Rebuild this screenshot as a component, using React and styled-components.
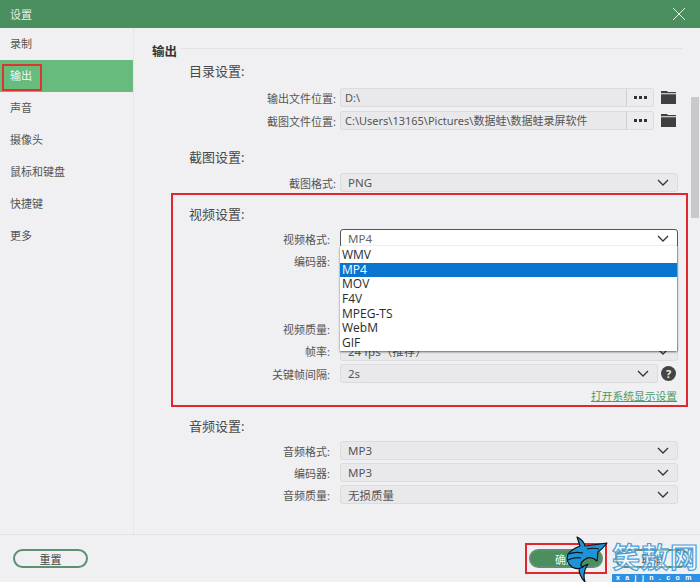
import React from "react";
import styled, { createGlobalStyle } from "styled-components";

const Global = createGlobalStyle`
  html, body { margin: 0; padding: 0; }
  body { width: 700px; height: 582px; overflow: hidden; background: #f0f0f2; }
  * { box-sizing: border-box; }
`;
const CJK = `"Noto Sans", "Noto Sans CJK SC", sans-serif`;

const Window = styled.div`
  position: relative; width: 700px; height: 582px; overflow: hidden;
  display: flex; flex-direction: column; background: #f0f0f2; color: #4a4a4a;
  font-family: ${CJK}; font-size: 11px;
`;
const TitleBar = styled.header`
  height: 28px; flex: none; background: #4b8f5f; color: #e6f0e8;
  display: flex; align-items: center; justify-content: space-between;
  padding: 0 14px 0 10px; font-size: 11px;
`;
const Content = styled.div`flex: 1; display: flex; min-height: 0; border-bottom: 1px solid #e2e2e4;`;
const Sidebar = styled.nav`width: 134px; flex: none; border-right: 1px solid #e6e6e8; display: flex; flex-direction: column;`;
const NavItem = styled.div`
  position: relative; height: 32px; line-height: 32px; padding-left: 10px; font-size: 11px;
  background: ${p => p.$active ? "#67bb7d" : "transparent"};
  color: ${p => p.$active ? "#f0f8f2" : "#555"};
`;
const NavMark = styled.span`
  position: absolute; left: 2px; top: 4px; width: 40px; height: 27px; border: 2px solid #d8362f;
`;
const Main = styled.main`position: relative; flex: 1; padding: 13px 0 0 18px; min-width: 0;`;
const Heading = styled.div`
  display: flex; align-items: center; gap: 4px; height: 18px; width: 530px;
  font-size: 12.5px; font-weight: 700; color: #333;
  &::after { content: ""; flex: 1; height: 1px; background: #e2e2e4; margin-top: -4px; }
`;
const SectionTitle = styled.div`
  height: 18px; line-height: 16px; margin-left: ${p => p.$inset ?? 37}px; margin-top: ${p => p.$mt ?? 0}px;
  font-size: 13px; color: #484848;
`;
const Rows = styled.div`display: flex; flex-direction: column; gap: ${p => p.$gap ?? 3}px; margin-top: ${p => p.$mt ?? 5}px;`;
const Row = styled.div`display: flex; align-items: center; height: 19px;`;
const Label = styled.label`
  width: ${p => p.$w}px; flex: none; text-align: right; font-size: 11px; color: #555; white-space: nowrap;
`;
const Field = styled.div`
  height: 19.5px; display: flex; align-items: center; justify-content: space-between;
  width: ${p => p.$w}px; flex: none; margin-left: ${p => p.$ml ?? 10}px; padding: 0 8px 0 7px;
  background: ${p => p.$open ? "#fff" : "#e9e9eb"};
  border: 1px solid ${p => p.$open ? "#555" : "#dcdcde"};
  border-radius: 3px; font-size: 11.5px; color: ${p => p.$open ? "#666" : "#555"}; white-space: nowrap;
`;
const PathGroup = styled.div`display: flex; margin-left: 4px;`;
const PathInput = styled.div`
  width: 287px; height: 19.5px; line-height: 18px; padding-left: 4px; background: #e9e9eb;
  border: 1px solid #dcdcde; border-right: 1px solid #cfcfd1; border-radius: 3px 0 0 3px;
  font-size: 11px; color: #555; white-space: nowrap; overflow: hidden;
`;
const DotsButton = styled.div`
  width: 27px; height: 19.5px; display: flex; align-items: center; justify-content: center; gap: 2px;
  background: #ececee; border: 1px solid #dcdcde; border-left: 0; border-radius: 0 3px 3px 0;
`;
const Dot = styled.i`width: 3px; height: 3px; background: #333;`;
const Folder = styled.svg`width: 15px; height: 13px; margin-left: 7px; flex: none;`;
const VideoBox = styled.section`
  width: 517px; height: 214px; margin: 1px 0 0 19px; padding: 11px 0 0 16px;
  border: 2px solid #e0272d; position: relative;
`;
const Dropdown = styled.ul`
  position: absolute; left: 167px; top: 51px; width: 337px; height: 105px; margin: 0; padding: 2px 0 0; list-style: none;
  background: #fff; box-shadow: 0 1px 2px rgba(0,0,0,.55), 1px 0 1px rgba(0,0,0,.2);
  font-family: "Open Sans", sans-serif; font-size: 12px; color: #2a2a2a;
`;
const Option = styled.li`
  height: 14.7px; line-height: 14.7px; padding-left: 2px;
  background: ${p => p.$on ? "#0a75cf" : "transparent"}; color: ${p => p.$on ? "#fff" : "#2a2a2a"};
`;
const Help = styled.span`
  width: 15px; height: 15px; margin-left: 3px; border-radius: 50%; background: #444; color: #eee;
  display: flex; align-items: center; justify-content: center; font-size: 11px; font-weight: 700;
`;
const LinkRow = styled.div`
  margin: 5px 9px 0 0; text-align: right; font-size: 10.75px; line-height: 16px;
  color: #4b9a66; text-decoration: underline;
`;
const Scroll = styled.div`
  position: absolute; right: 1px; top: 69px; width: 8px; height: 121px; background: #c9c9cb;
`;
const Footer = styled.footer`
  height: 47px; flex: none; display: flex; align-items: center; justify-content: space-between; padding: 0 10px 0 13px;
`;
const Actions = styled.div`display: flex; align-items: center; gap: 8px;`;
const Pill = styled.button`
  width: 75px; height: 19px; padding: 0; border-radius: 10px; font: inherit; font-size: 11px;
  border: 2px solid #5c9070; background: ${p => p.$fill ? "#4b8f5f" : "transparent"};
  color: ${p => p.$fill ? "#eef6f0" : "#444"}; display: flex; align-items: center; justify-content: center;
`;
const ConfirmMark = styled.div`
  border: 2px solid #e0272d; padding: 4px 2px; width: 82px; height: 31px; display: flex; align-items: center; justify-content: center;
`;
const Watermark = styled.div`
  position: absolute; right: 0; bottom: 0; width: 88px; height: 42px;
  display: flex; flex-direction: column; align-items: stretch; justify-content: flex-end;
`;
const WmTitle = styled.div`
  font-family: "Noto Sans CJK SC", sans-serif; font-weight: 700; font-size: 28px; line-height: 32px; height: 32px;
  letter-spacing: 1px; color: rgba(255,255,255,.45); -webkit-text-stroke: 1.2px #4a9fdc; white-space: nowrap;
`;
const WmBand = styled.div`
  height: 8px; line-height: 8px; background: #2f8fe0; color: #fff; font-family: "Liberation Sans", sans-serif;
  font-size: 7px; font-weight: 700; letter-spacing: 5.4px; padding-left: 4px; white-space: nowrap; margin-top: 2px;
`;
const Shark = styled.svg`position: absolute; left: 560px; top: 530px; width: 52px; height: 52px;`;

const Chevron = () => (
  <svg width="12" height="7" viewBox="0 0 12 7"><path d="M1 1l5 5 5-5" fill="none" stroke="#333" strokeWidth="1.3" /></svg>
);
const FolderIcon = () => (
  <Folder viewBox="0 0 15 13"><path d="M0 0h6l1 1h8v1.2H0z M0 3.2h15V13H0z" fill="#404040" /></Folder>
);
const Select = ({ children, w = 338, ml, open }) => (
  <Field $w={w} $ml={ml} $open={open}><span>{children}</span><Chevron /></Field>
);

export default function App() {
  return (
    <Window>
      <Global />
      <TitleBar>
        <span>设置</span>
        <svg width="14" height="14" viewBox="0 0 14 14"><path d="M1 1l12 12M13 1L1 13" stroke="#e8f2ea" strokeWidth="1" /></svg>
      </TitleBar>
      <Content>
        <Sidebar>
          <NavItem>录制</NavItem>
          <NavItem $active>输出<NavMark /></NavItem>
          <NavItem>声音</NavItem>
          <NavItem>摄像头</NavItem>
          <NavItem>鼠标和键盘</NavItem>
          <NavItem>快捷键</NavItem>
          <NavItem>更多</NavItem>
        </Sidebar>
        <Main>
          <Heading>输出</Heading>
          <SectionTitle $mt={4}>目录设置:</SectionTitle>
          <Rows $gap={4} $mt={7}>
            <Row>
              <Label $w={184}>输出文件位置:</Label>
              <PathGroup><PathInput>D:\</PathInput><DotsButton><Dot /><Dot /><Dot /></DotsButton></PathGroup>
              <FolderIcon />
            </Row>
            <Row>
              <Label $w={184}>截图文件位置:</Label>
              <PathGroup><PathInput>C:\Users\13165\Pictures\数据蛙\数据蛙录屏软件</PathInput><DotsButton><Dot /><Dot /><Dot /></DotsButton></PathGroup>
              <FolderIcon />
            </Row>
          </Rows>
          <SectionTitle $mt={19}>截图设置:</SectionTitle>
          <Rows $mt={6}>
            <Row><Label $w={184}>截图格式:</Label><Select ml={4}>PNG</Select></Row>
          </Rows>
          <VideoBox>
            <SectionTitle $inset={0}>视频设置:</SectionTitle>
            <Rows $gap={3.5}>
              <Row><Label $w={141}>视频格式:</Label><Select open>MP4</Select></Row>
              <Row><Label $w={141}>编码器:</Label></Row>
              <Row />
              <Row />
              <Row><Label $w={141}>视频质量:</Label></Row>
              <Row><Label $w={141}>帧率:</Label><Select>24 fps（推荐）</Select></Row>
              <Row><Label $w={141}>关键帧间隔:</Label><Select w={318}>2s</Select><Help>?</Help></Row>
            </Rows>
            <LinkRow>打开系统显示设置</LinkRow>
            <Dropdown>
              <Option>WMV</Option>
              <Option $on>MP4</Option>
              <Option>MOV</Option>
              <Option>F4V</Option>
              <Option>MPEG-TS</Option>
              <Option>WebM</Option>
              <Option>GIF</Option>
            </Dropdown>
          </VideoBox>
          <SectionTitle $mt={11}>音频设置:</SectionTitle>
          <Rows>
            <Row><Label $w={178}>音频格式:</Label><Select>MP3</Select></Row>
            <Row><Label $w={178}>编码器:</Label><Select>MP3</Select></Row>
            <Row><Label $w={178}>音频质量:</Label><Select>无损质量</Select></Row>
          </Rows>
          <Scroll />
        </Main>
      </Content>
      <Footer>
        <Pill>重置</Pill>
        <Actions>
          <ConfirmMark><Pill $fill>确定</Pill></ConfirmMark>
          <Pill>取消</Pill>
        </Actions>
      </Footer>
      <Watermark>
        <WmTitle>笑敖网</WmTitle>
        <WmBand>xajjn.com</WmBand>
      </Watermark>
      <Shark viewBox="0 0 52 52">
        <path d="M19 38C22 38 25 35 28 34C24 40 23 46 25 52C21 48 19 43 19 38Z" fill="#1d93d8" stroke="#111" strokeWidth="1.2" strokeLinejoin="round" />
        <path d="M17 7C21 9 24 12 25 16C33 15 41 14 47 13C44 17 41 20 38 22L37 31C33 27 28 27 24 30C20 33 20 36 23 37C19 39 15 39 12 37C8 34 6 29 8 24C11 20 15 18 20 16C19 13 18 10 17 7Z" fill="#1d93d8" stroke="#111" strokeWidth="1.2" strokeLinejoin="round" />
        <path d="M9 24C13 22 18 22 23 23M8 30C12 28 17 27 21 28M27 19C31 18 35 18 39 19" fill="none" stroke="#111" strokeWidth="1.2" />
      </Shark>
    </Window>
  );
}
